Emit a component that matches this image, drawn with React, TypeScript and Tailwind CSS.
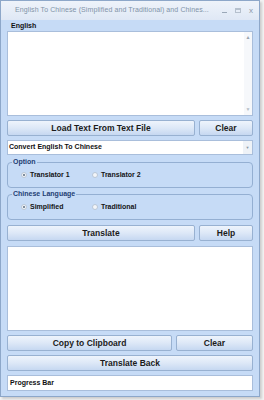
import React from "react";

const font = { fontFamily: '"Liberation Sans", Arial, sans-serif' };

const Btn = ({ label, className }: { label: string; className?: string }) => (
  <button
    className={`h-[16px] rounded-[2px] border border-[#98b1d1] bg-gradient-to-b from-[#eef4fc] via-[#dde8f7] to-[#c6d8f1] text-[8.5px] font-bold text-[#1b1b1b] leading-none ${className ?? ""}`}
  >
    {label}
  </button>
);

const Radio = ({ label, checked }: { label: string; checked?: boolean }) => (
  <div className="flex items-center gap-[3px] w-[71px]">
    <span className="w-[6px] h-[6px] rounded-full border border-[#b9c6d6] bg-[#f3f5f8] flex items-center justify-center">
      {checked && <span className="w-[2px] h-[2px] rounded-full bg-[#5a6b80]" />}
    </span>
    <span className="text-[7px] font-bold text-[#141414]">{label}</span>
  </div>
);

const Group = ({ title, children }: { title: string; children: React.ReactNode }) => (
  <fieldset className="border border-[#94afd2] rounded-[4px] h-[30px] pl-[13px] min-w-0">
    <legend className="ml-[-9px] px-[1px] text-[7px] font-bold text-[#1f3e73] leading-[8px]">{title}</legend>
    <div className="flex items-center h-[18px]">{children}</div>
  </fieldset>
);

const ScrollBar = () => (
  <div className="w-[8px] h-full flex flex-col justify-between items-center py-[3px] bg-[#f6f8fb]">
    <span className="text-[5px] text-[#9aa4b0] leading-none">▲</span>
    <span className="text-[5px] text-[#b4bcc6] leading-none">▼</span>
  </div>
);

export default function App() {
  return (
    <div className="w-[264px] h-[400px] bg-[#f2f2f2]" style={font}>
      <div className="w-[260px] h-[397px] border border-[#8da7c9] bg-[#c6dbf6] flex flex-col shadow-[2px_2px_2px_rgba(0,0,0,0.15)]">
        <div className="h-[19px] flex items-center bg-gradient-to-b from-[#eef3fa] to-[#dfe8f5] pl-[14px] pr-[6px]">
          <span className="text-[7px] tracking-[0.1px] text-[#8193a8] whitespace-nowrap flex-1">
            English To Chinese (Simplified and Traditional) and Chines...
          </span>
          <div className="flex items-center gap-[8px] text-[#9aa8b8]">
            <span className="w-[5px] h-[1px] bg-[#9aa8b8] mt-[3px]" />
            <span className="w-[6px] h-[5px] border border-[#b5c0cd] border-t-2" />
            <span className="text-[8px] leading-none text-[#8a98a8]">x</span>
          </div>
        </div>
        <div className="flex flex-col px-[6px]">
          <div className="h-[11px] flex items-end pl-[4px] text-[7px] font-bold text-[#111]">English</div>
          <div className="h-[85px] border border-[#a9bedb] bg-white flex justify-end">
            <ScrollBar />
          </div>
          <div className="flex gap-[4px] mt-[4px]">
            <Btn label="Load Text From Text File" className="w-[188px]" />
            <Btn label="Clear" className="flex-1" />
          </div>
          <div className="h-[15px] mt-[4px] border border-[#a9bedb] bg-white flex items-center justify-between">
            <span className="pl-[1px] text-[7px] font-bold text-[#111]">Convert English To Chinese</span>
            <span className="w-[9px] h-full bg-[#eef2f7] flex items-center justify-center text-[4px] text-[#8896a6]">▼</span>
          </div>
          <div className="mt-[3px]">
            <Group title="Option">
              <Radio label="Translator 1" checked />
              <Radio label="Translator 2" />
            </Group>
          </div>
          <div className="mt-[2px]">
            <Group title="Chinese Language">
              <Radio label="Simplified" checked />
              <Radio label="Traditional" />
            </Group>
          </div>
          <div className="flex gap-[4px] mt-[5px]">
            <Btn label="Translate" className="w-[188px]" />
            <Btn label="Help" className="flex-1" />
          </div>
          <div className="h-[85px] mt-[5px] border border-[#a9bedb] bg-white" />
          <div className="flex gap-[4px] mt-[4px]">
            <Btn label="Copy to Clipboard" className="w-[165px]" />
            <Btn label="Clear" className="flex-1" />
          </div>
          <Btn label="Translate Back" className="w-full mt-[4px]" />
          <div className="h-[16px] mt-[4px] border border-[#a9bedb] bg-white flex items-center pl-[2px] text-[7px] font-bold text-[#111]">
            Progress Bar
          </div>
        </div>
      </div>
    </div>
  );
}
